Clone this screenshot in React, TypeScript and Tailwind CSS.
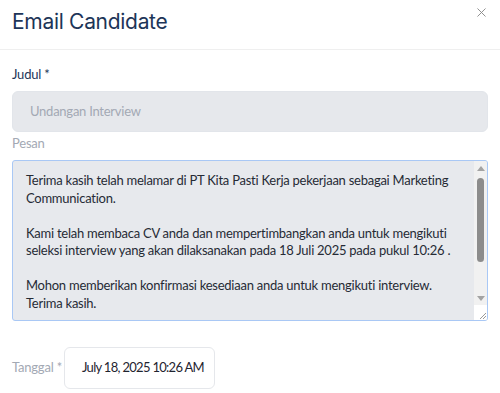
import { X } from 'lucide-react'

const message = [
  'Terima kasih telah melamar di PT Kita Pasti Kerja pekerjaan sebagai Marketing Communication.',
  '',
  'Kami telah membaca CV anda dan mempertimbangkan anda untuk mengikuti seleksi interview yang akan dilaksanakan pada 18 Juli 2025 pada pukul 10:26 .',
  '',
  'Mohon memberikan konfirmasi kesediaan anda untuk mengikuti interview.',
  'Terima kasih.',
]

const App = () => {
  return (
    <div className="w-[500px] h-[393px] overflow-hidden bg-white font-['Lato',sans-serif]">
      {/* Header */}
      <div className="flex items-start justify-between border-b border-[#efefef] h-[50px] pl-3 pr-[11px]">
        <h1 className="mt-[8px] font-['Inter',sans-serif] text-[21px] leading-[28px] text-[#1d3558] tracking-[-0.3px]">Email Candidate</h1>
        <button type="button" className="mt-[5px] text-[#8a8a8a]">
          <X size={15} strokeWidth={1.5} />
        </button>
      </div>

      <div className="px-3">
        <label className="block mt-[15px] text-[13px] leading-[18px] text-[#1d3558] tracking-[-0.2px]">Judul *</label>
        <div className="mt-[8px] h-[41px] rounded-md bg-[#e6e8ec] border border-[#e2e5ea] flex items-center pl-[17px] text-[13px] text-[#a3a9b4] tracking-[-0.25px]">
          Undangan Interview
        </div>
        <label className="block mt-[2px] text-[13px] leading-[18px] text-[#a3a9b4] tracking-[-0.2px]">Pesan</label>

        {/* Textarea */}
        <div className="mt-[8px] h-[161px] overflow-hidden rounded-[3px] border border-[#a9c8f5] bg-[#e7e9ed] flex">
          <div className="flex-1 pl-[13px] pr-[10px] pt-[11px] text-[13px] leading-[17.5px] text-[#262b35] tracking-[-0.25px]">
            {message.map((line, i) => (
              <p key={i} className="min-h-[17.5px]">{line}</p>
            ))}
          </div>
          <div className="w-[13px] shrink-0 bg-[#f1f1f1] flex flex-col items-center">
            <div className="h-[14px] flex items-center justify-center">
              <div className="w-0 h-0 border-l-[4px] border-r-[4px] border-b-[5px] border-l-transparent border-r-transparent border-b-[#a3a3a3]" />
            </div>
            <div className="w-[7px] h-[84px] mt-[3px] rounded-full bg-[#8c8c8c]" />
            <div className="flex-1" />
            <div className="h-[14px] flex items-center justify-center">
              <div className="w-0 h-0 border-l-[4px] border-r-[4px] border-t-[5px] border-l-transparent border-r-transparent border-t-[#a3a3a3]" />
            </div>
            <div className="h-[15px] w-full bg-white flex items-end justify-end">
              <svg width="9" height="9" viewBox="0 0 9 9">
                <path d="M8 2 L2 8 M8 5 L5 8" stroke="#9a9a9a" strokeWidth="1" />
              </svg>
            </div>
          </div>
        </div>

        {/* Tanggal */}
        <div className="mt-[26px] flex items-center gap-[2px]">
          <label className="text-[13px] text-[#a3a9b4] tracking-[-0.2px]">Tanggal *</label>
          <div className="h-[42px] w-[151px] whitespace-nowrap rounded-md border border-[#e5e7eb] bg-white flex items-center pl-[17px] text-[13px] text-[#1f2430] tracking-[-0.7px]">
            July 18, 2025 10:26 AM
          </div>
        </div>
      </div>
    </div>
  )
}

export default App
